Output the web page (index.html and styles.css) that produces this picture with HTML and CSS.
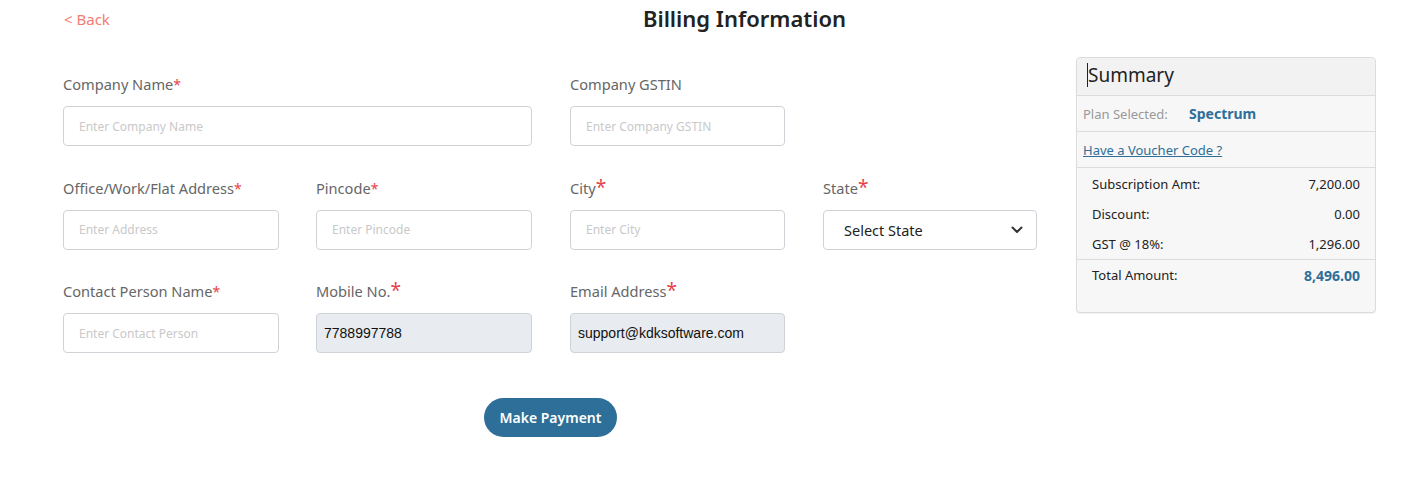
FILE: index.html
```html
<!DOCTYPE html>
<html>
<head>
<meta charset="utf-8">
<link rel="stylesheet" href="styles.css">
</head>
<body>
<div class="page">
  <div class="topbar">
    <a class="back" href="#">&lt; Back</a>
    <h1 class="title">Billing Information</h1>
  </div>
  <div class="main">
    <form class="form">
      <div class="grid">
        <div class="field span2">
          <label class="lbl">Company Name<span class="req">*</span></label>
          <input class="inp" type="text" placeholder="Enter Company Name">
        </div>
        <div class="field span2 c3">
          <label class="lbl">Company GSTIN</label>
          <input class="inp w1" type="text" placeholder="Enter Company GSTIN">
        </div>

        <div class="field">
          <label class="lbl">Office/Work/Flat Address<span class="req">*</span></label>
          <input class="inp" type="text" placeholder="Enter Address">
        </div>
        <div class="field">
          <label class="lbl">Pincode<span class="req">*</span></label>
          <input class="inp" type="text" placeholder="Enter Pincode">
        </div>
        <div class="field c3">
          <label class="lbl">City<span class="req big">*</span></label>
          <input class="inp" type="text" placeholder="Enter City">
        </div>
        <div class="field c4">
          <label class="lbl">State<span class="req big">*</span></label>
          <div class="selectbox">
            <span>Select State</span>
            <svg class="chev" width="12" height="8" viewBox="0 0 12 8"><path d="M1.5 1.5 L6 6 L10.5 1.5" fill="none" stroke="#333" stroke-width="2" stroke-linecap="round" stroke-linejoin="round"/></svg>
          </div>
        </div>

        <div class="field">
          <label class="lbl">Contact Person Name<span class="req">*</span></label>
          <input class="inp" type="text" placeholder="Enter Contact Person">
        </div>
        <div class="field">
          <label class="lbl">Mobile No.<span class="req big">*</span></label>
          <input class="inp dis" type="text" value="7788997788" disabled>
        </div>
        <div class="field c3">
          <label class="lbl">Email Address<span class="req big">*</span></label>
          <input class="inp dis" type="text" value="support@kdksoftware.com" disabled>
        </div>
      </div>
      <div class="actions">
        <button class="pay" type="button">Make Payment</button>
      </div>
    </form>

    <aside class="summary">
      <div class="sum-head"><span class="caret"></span>Summary</div>
      <div class="sum-plan"><span class="plan-lbl">Plan Selected:</span><span class="plan-val">Spectrum</span></div>
      <div class="sum-voucher"><a href="#">Have a Voucher Code ?</a></div>
      <div class="sum-rows">
        <div class="row"><span>Subscription Amt:</span><span>7,200.00</span></div>
        <div class="row"><span>Discount:</span><span>0.00</span></div>
        <div class="row"><span>GST @ 18%:</span><span>1,296.00</span></div>
      </div>
      <div class="sum-total">
        <div class="row"><span>Total Amount:</span><span class="total">8,496.00</span></div>
      </div>
    </aside>
  </div>
</div>
</body>
</html>
```

FILE: styles.css
```css
* { box-sizing: border-box; }
html, body { margin: 0; padding: 0; background: #fff; }
body {
  font-family: "Noto Sans", "Open Sans", sans-serif;
  color: #222;
}
.page { padding: 0 0 0 63px; }

.topbar {
  position: relative;
  height: 57px;
  display: flex;
  justify-content: center;
}
.back {
  position: absolute;
  left: 1px;
  top: 9px;
  color: #f47c72;
  text-decoration: none;
  font-size: 15px;
}
.title {
  margin: 3px 0 0 0;
  font-size: 22px;
  font-weight: 600;
  color: #222;
}

.main {
  display: flex;
  gap: 38px;
  align-items: flex-start;
}

.form { width: 975px; }
.grid {
  display: grid;
  grid-template-columns: 216px 216px 216px 215px;
  column-gap: 37px;
  row-gap: 31.5px;
  padding-top: 17px;
}
.c3 { margin-left: 1px; }
.c4 { margin-left: 1px; }
.field { display: flex; flex-direction: column; }
.span2 { grid-column: span 2; }
.lbl {
  font-size: 14.6px;
  color: #666;
  height: 24px;
  line-height: 20px;
  margin-bottom: 8px;
  white-space: nowrap;
}
.req { color: #e8414a; font-size: 14px; }
.req.big { font-size: 19px; line-height: 14px; }

.inp {
  height: 40px;
  border: 1px solid #cfd3d8;
  border-radius: 4px;
  padding: 0 15px;
  font-family: "Noto Sans", sans-serif;
  font-size: 12px;
  color: #222;
  background: #fff;
  outline: none;
  width: 100%;
}
.c3 .inp { width: 215px; }
.inp::placeholder { color: #c9c9c9; }
.w1 { width: 215px; }
.inp.dis {
  background: #e8ebef;
  font-family: "Liberation Sans", Arial, sans-serif;
  font-size: 14px;
  color: #111;
  padding-left: 7px;
}

.selectbox {
  height: 40px;
  border: 1px solid #cfd3d8;
  border-radius: 4px;
  display: flex;
  align-items: center;
  justify-content: space-between;
  padding: 0 13px 0 20px;
  font-size: 14.5px;
  color: #222;
}

.actions {
  display: flex;
  justify-content: center;
  padding-top: 45px;
}
.pay {
  height: 39px;
  width: 133px;
  border: none;
  border-radius: 20px;
  background: #2e6f99;
  color: #fff;
  font-family: "Noto Sans", sans-serif;
  font-weight: 600;
  font-size: 14px;
}

.summary {
  width: 300px;
  background: #f7f7f7;
  border: 1px solid #dcdcdc;
  border-radius: 4px;
  padding-bottom: 22px;
  box-shadow: 0 1px 1px rgba(0,0,0,0.06);
}
.sum-head {
  background: #f2f2f2;
  height: 38px;
  border-bottom: 1px solid #dcdcdc;
  font-size: 19px;
  color: #222;
  padding-left: 10px;
  padding-bottom: 4px;
  display: flex;
  align-items: center;
  border-radius: 4px 4px 0 0;
}
.caret {
  display: inline-block;
  width: 1px;
  height: 24px;
  background: #222;
}
.sum-plan {
  height: 36px;
  border-bottom: 1px solid #dcdcdc;
  display: flex;
  align-items: center;
  padding-left: 6px;
  font-size: 13px;
}
.plan-lbl { color: #999; width: 106px; }
.plan-val { color: #2e6f99; font-weight: 700; font-size: 14px; }
.sum-voucher {
  height: 36px;
  border-bottom: 1px solid #dcdcdc;
  display: flex;
  align-items: center;
  padding-left: 6px;
  font-size: 13px;
}
.sum-voucher a { color: #2e6f99; text-decoration: underline; }
.sum-rows {
  padding: 1px 15px 0 15px;
  border-bottom: 1px solid #dcdcdc;
}
.row {
  display: flex;
  justify-content: space-between;
  align-items: center;
  height: 30px;
  font-size: 13px;
  color: #222;
}
.sum-total { padding: 0 15px; }
.total { color: #2e6f99; font-weight: 700; font-size: 14px; }
```
